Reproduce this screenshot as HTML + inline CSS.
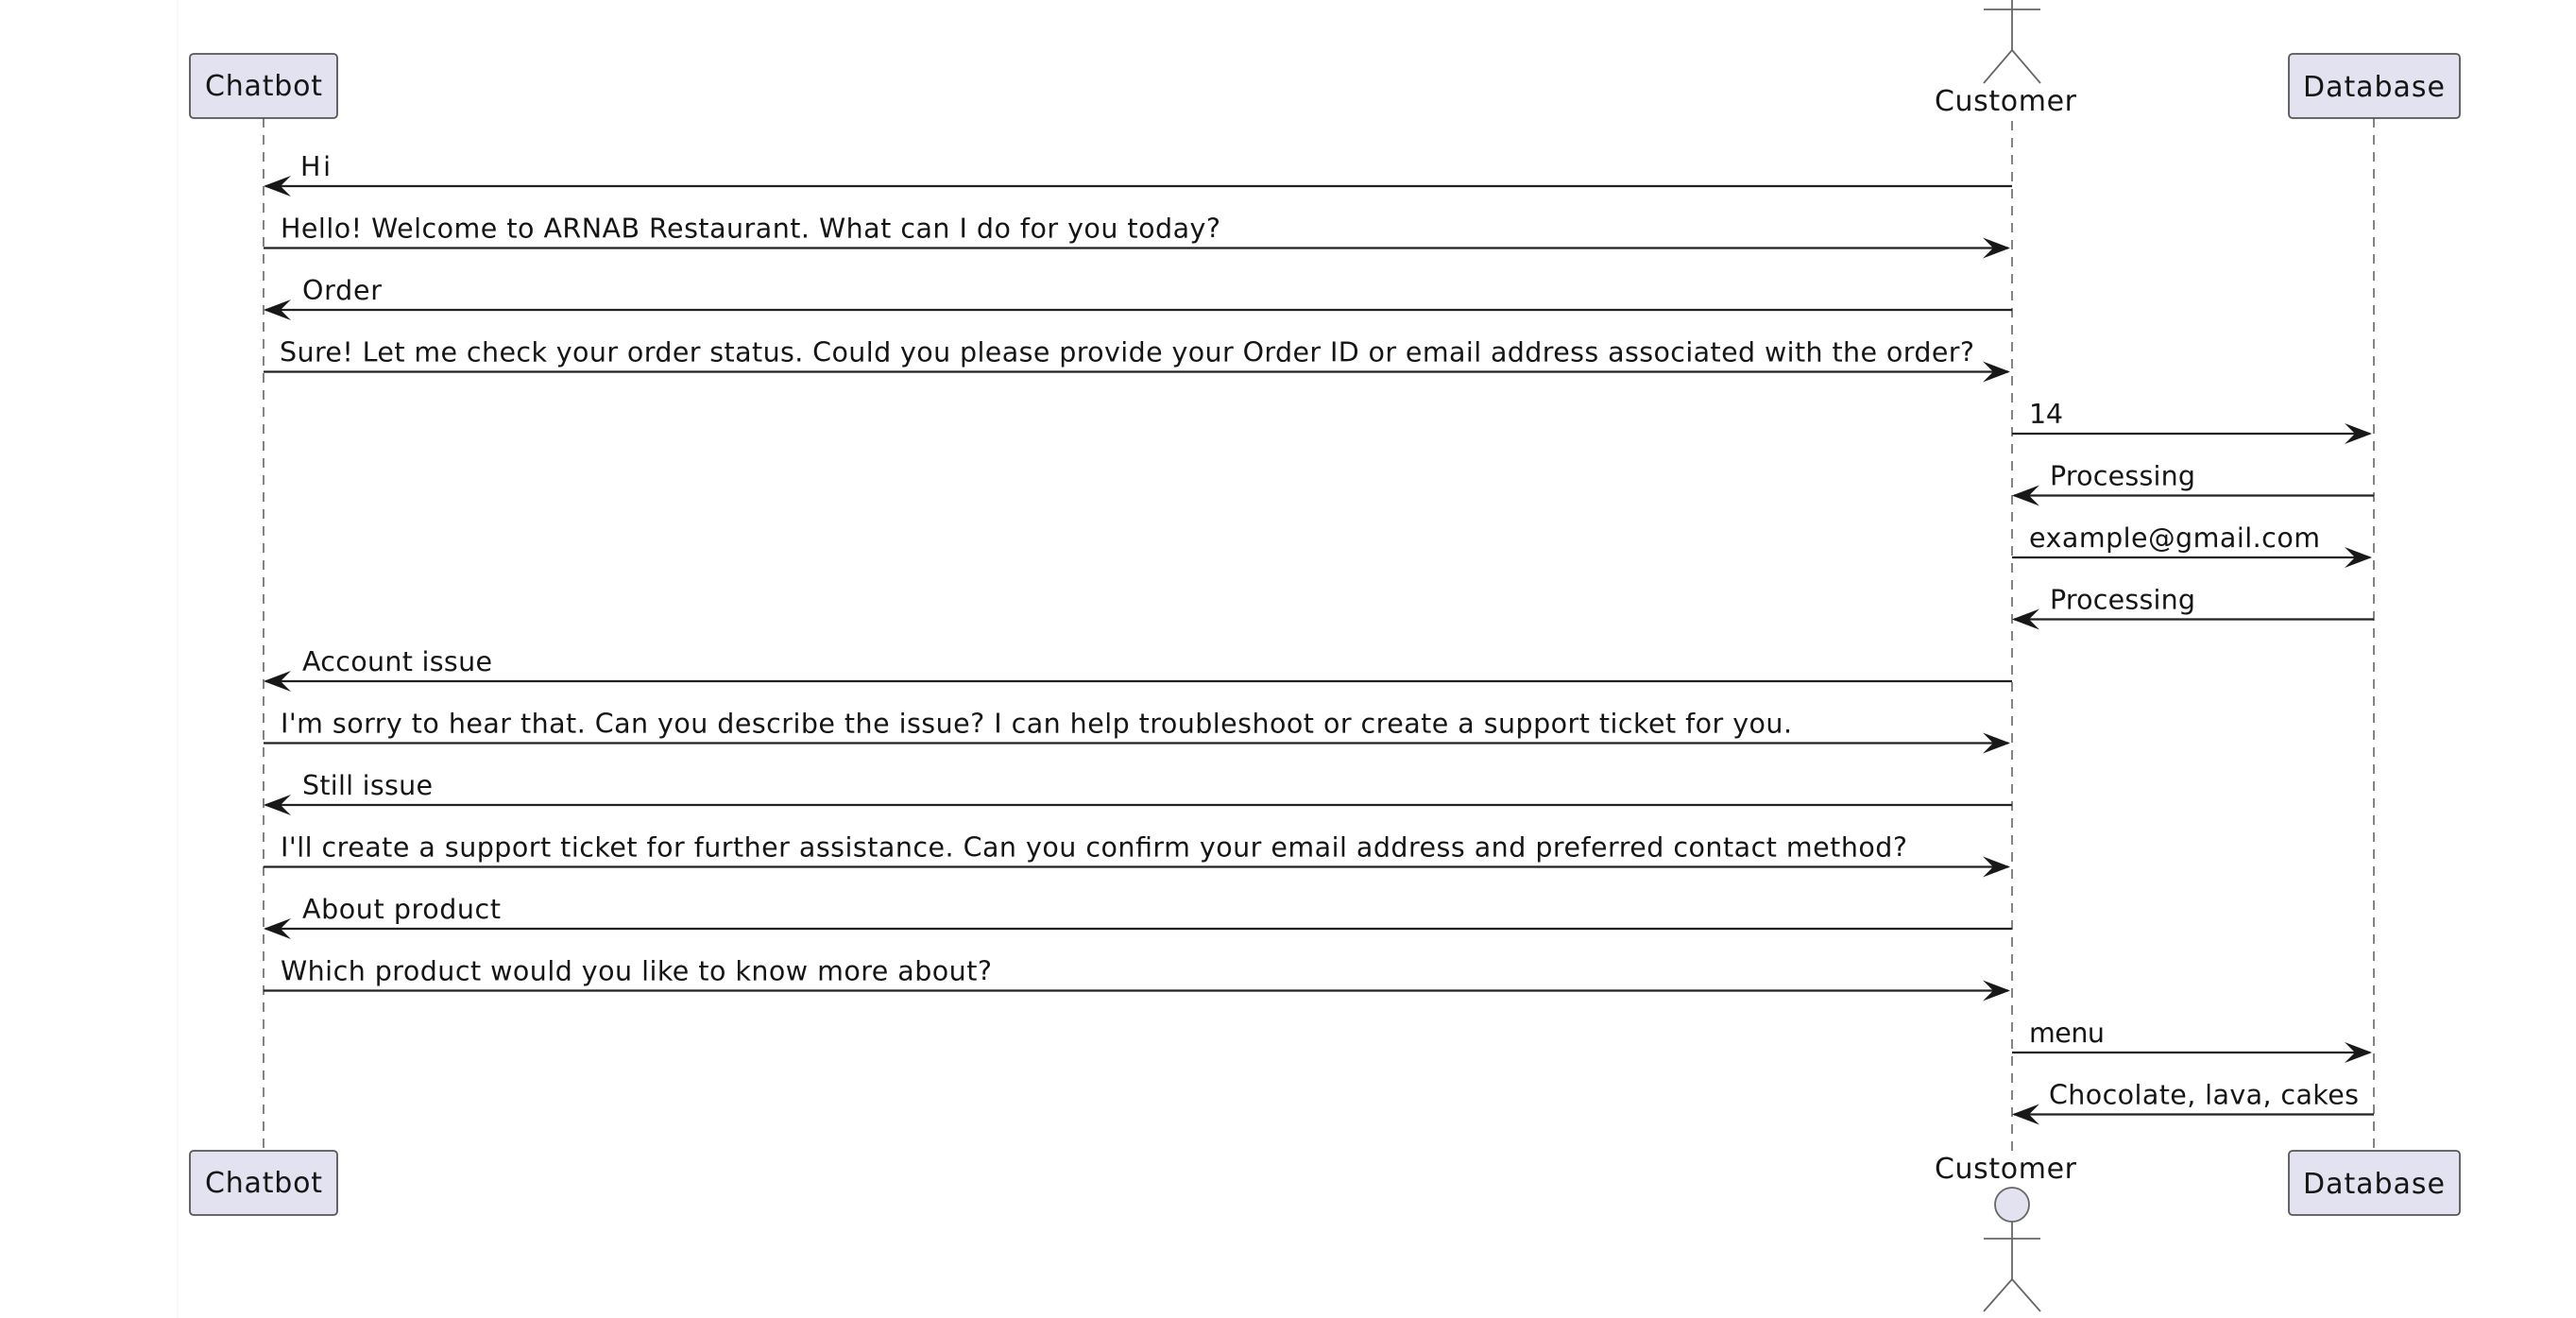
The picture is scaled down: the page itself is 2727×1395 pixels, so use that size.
<!DOCTYPE html>
<html><head><meta charset="utf-8"><style>
html,body{margin:0;padding:0;background:#fff;}
svg{display:block;}
text{font-family:"DejaVu Sans","Liberation Sans",sans-serif;fill:#151515;}
</style></head><body>
<svg width="2727" height="1395" viewBox="0 0 2727 1395" xmlns="http://www.w3.org/2000/svg">
<line x1="188" y1="0" x2="188" y2="1395" stroke="#f3f3f3" stroke-width="1"/>
<g stroke="#666" stroke-width="1.6" stroke-dasharray="10,8" fill="none">
<line x1="279" y1="125" x2="279" y2="1218"/>
<line x1="2130" y1="128" x2="2130" y2="1222"/>
<line x1="2513" y1="125" x2="2513" y2="1218"/>
</g>
<g fill="#e2e2f0" stroke="#555" stroke-width="1.8">
<rect x="201" y="57" width="156" height="68" rx="4"/>
<rect x="2423" y="57" width="181" height="68" rx="4"/>
<rect x="201" y="1218" width="156" height="68" rx="4"/>
<rect x="2423" y="1218" width="181" height="68" rx="4"/>
</g>
<g font-size="30">
<text x="217" y="101" textLength="124">Chatbot</text>
<text x="2438" y="102" textLength="150">Database</text>
<text x="217" y="1262" textLength="124">Chatbot</text>
<text x="2438" y="1263" textLength="150">Database</text>
<text x="2048" y="117" textLength="150">Customer</text>
<text x="2048" y="1247" textLength="150">Customer</text>
</g>
<g stroke="#666" stroke-width="1.8" fill="none">
<line x1="2130" y1="0" x2="2130" y2="53"/>
<line x1="2100" y1="10" x2="2160" y2="10"/>
<path d="M2100 88 L2130 53 L2160 88"/>
<ellipse cx="2130" cy="1275" rx="18" ry="18" fill="#e2e2f0"/>
<line x1="2130" y1="1293" x2="2130" y2="1354"/>
<line x1="2100" y1="1311" x2="2160" y2="1311"/>
<path d="M2100 1388 L2130 1354 L2160 1388"/>
</g>
<defs>
<path id="ar" d="M0 0 L-29 -11 L-18 0 L-29 11 Z" fill="#181818"/>
</defs>
<g stroke="#222" stroke-width="2.2">
<line x1="281" y1="197" x2="2130" y2="197"/>
<line x1="279" y1="262.5" x2="2126" y2="262.5"/>
<line x1="281" y1="328" x2="2130" y2="328"/>
<line x1="279" y1="393.5" x2="2126" y2="393.5"/>
<line x1="2130" y1="459" x2="2509" y2="459"/>
<line x1="2132" y1="524.5" x2="2513" y2="524.5"/>
<line x1="2130" y1="590" x2="2509" y2="590"/>
<line x1="2132" y1="655.5" x2="2513" y2="655.5"/>
<line x1="281" y1="721" x2="2130" y2="721"/>
<line x1="279" y1="786.5" x2="2126" y2="786.5"/>
<line x1="281" y1="852" x2="2130" y2="852"/>
<line x1="279" y1="917.5" x2="2126" y2="917.5"/>
<line x1="281" y1="983" x2="2130" y2="983"/>
<line x1="279" y1="1048.5" x2="2126" y2="1048.5"/>
<line x1="2130" y1="1114" x2="2509" y2="1114"/>
<line x1="2132" y1="1179.5" x2="2513" y2="1179.5"/>
</g>
<g>
<use href="#ar" transform="translate(279,197) scale(-1,1)"/>
<use href="#ar" transform="translate(2128,262.5)"/>
<use href="#ar" transform="translate(279,328) scale(-1,1)"/>
<use href="#ar" transform="translate(2128,393.5)"/>
<use href="#ar" transform="translate(2511,459)"/>
<use href="#ar" transform="translate(2130,524.5) scale(-1,1)"/>
<use href="#ar" transform="translate(2511,590)"/>
<use href="#ar" transform="translate(2130,655.5) scale(-1,1)"/>
<use href="#ar" transform="translate(279,721) scale(-1,1)"/>
<use href="#ar" transform="translate(2128,786.5)"/>
<use href="#ar" transform="translate(279,852) scale(-1,1)"/>
<use href="#ar" transform="translate(2128,917.5)"/>
<use href="#ar" transform="translate(279,983) scale(-1,1)"/>
<use href="#ar" transform="translate(2128,1048.5)"/>
<use href="#ar" transform="translate(2511,1114)"/>
<use href="#ar" transform="translate(2130,1179.5) scale(-1,1)"/>
</g>
<g font-size="28.5">
<text x="318" y="186" textLength="32">Hi</text>
<text x="297" y="251.5" textLength="995">Hello! Welcome to ARNAB Restaurant. What can I do for you today?</text>
<text x="320" y="317" textLength="84">Order</text>
<text x="296" y="382.5" textLength="1794">Sure! Let me check your order status. Could you please provide your Order ID or email address associated with the order?</text>
<text x="2148" y="448" textLength="36">14</text>
<text x="2170" y="513.5" textLength="154">Processing</text>
<text x="2148" y="579" textLength="308">example@gmail.com</text>
<text x="2170" y="644.5" textLength="154">Processing</text>
<text x="320" y="710" textLength="201">Account issue</text>
<text x="297" y="775.5" textLength="1600">I'm sorry to hear that. Can you describe the issue? I can help troubleshoot or create a support ticket for you.</text>
<text x="320" y="841" textLength="138">Still issue</text>
<text x="297" y="906.5" textLength="1722">I'll create a support ticket for further assistance. Can you confirm your email address and preferred contact method?</text>
<text x="320" y="972" textLength="210">About product</text>
<text x="297" y="1037.5" textLength="753">Which product would you like to know more about?</text>
<text x="2148" y="1103" textLength="80">menu</text>
<text x="2169" y="1168.5" textLength="328">Chocolate, lava, cakes</text>
</g>
</svg>
</body></html>
